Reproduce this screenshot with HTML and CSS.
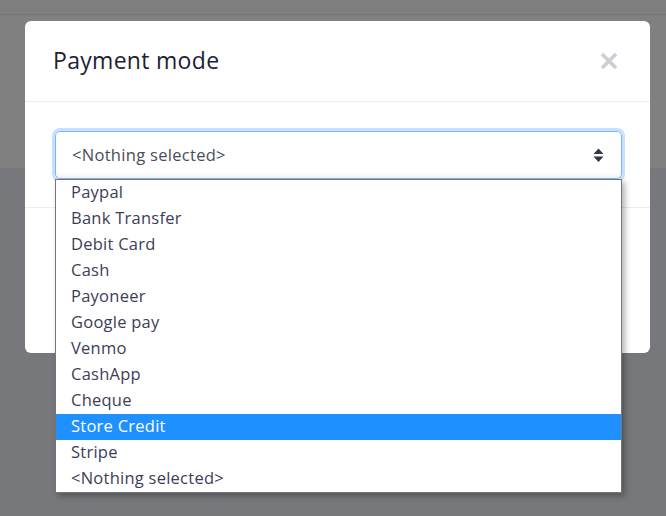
FILE: index.html
```html
<!DOCTYPE html>
<html>
<head>
<meta charset="utf-8">
<link rel="stylesheet" href="styles.css">
</head>
<body>
<div class="page">
  <div class="topbar"></div>
  <div class="band"></div>
  <div class="rest"></div>
</div>
<div class="modal">
  <div class="modal-header">
    <h2 class="modal-title">Payment mode</h2>
    <svg class="close" width="18" height="18" viewBox="0 0 18 18"><path d="M2 2 L16 16 M16 2 L2 16" stroke="#cdcdd5" stroke-width="3.6" stroke-linecap="butt" fill="none"/></svg>
  </div>
  <div class="modal-body">
    <div class="select">
      <span class="select-value">&lt;Nothing selected&gt;</span>
      <svg class="arrows" width="11" height="15" viewBox="0 0 11 15"><path d="M5.5 0.5 L10.5 6 L0.5 6 Z M0.5 8.5 L10.5 8.5 L5.5 14 Z" fill="#33374a"/></svg>
    </div>
  </div>
  <div class="modal-footer"></div>
</div>
<div class="dropdown">
  <div class="opt">Paypal</div>
  <div class="opt">Bank Transfer</div>
  <div class="opt">Debit Card</div>
  <div class="opt">Cash</div>
  <div class="opt">Payoneer</div>
  <div class="opt">Google pay</div>
  <div class="opt">Venmo</div>
  <div class="opt">CashApp</div>
  <div class="opt">Cheque</div>
  <div class="opt active">Store Credit</div>
  <div class="opt">Stripe</div>
  <div class="opt">&lt;Nothing selected&gt;</div>
</div>
</body>
</html>
```
FILE: styles.css
```css
* { box-sizing: border-box; }
html, body {
  margin: 0;
  padding: 0;
  width: 666px;
  height: 516px;
  overflow: hidden;
  font-family: "Open Sans", "Liberation Sans", sans-serif;
}
body { background: #77787c; position: relative; }
.page { display: flex; flex-direction: column; height: 516px; }
.topbar { height: 15px; background: #7f7f7f; border-bottom: 1px solid #747474; }
.band { height: 153px; background: #808080; }
.rest { flex: 1; background: #77787c; }

.modal {
  position: absolute;
  left: 25px;
  top: 21px;
  width: 625px;
  height: 332px;
  background: #fff;
  border-radius: 6px;
  display: flex;
  flex-direction: column;
}
.modal-header {
  height: 81px;
  border-bottom: 1px solid #ebebf0;
  display: flex;
  align-items: center;
  justify-content: space-between;
  padding: 0 32px 0 28px;
}
.modal-title {
  margin: 0;
  font-size: 23px;
  font-weight: 500;
  letter-spacing: 0.3px;
  color: #1e2235;
  line-height: 30px;
  padding-bottom: 2px;
}
.close { display: block; }
.modal-body {
  padding: 29px 28px 28px 30px;
}
.select {
  height: 48px;
  border: 1px solid #7fb6f6;
  border-radius: 5px;
  box-shadow: 0 0 0 3px #c7e0ff, inset 0 -6px 6px -4px rgba(0,0,0,0.05);
  display: flex;
  align-items: center;
  justify-content: space-between;
  padding: 0 17px 0 16px;
}
.select-value {
  font-size: 16.5px;
  letter-spacing: 0.3px;
  color: #4a4b5c;
  line-height: 24px;
  padding-bottom: 1px;
}
.arrows { display: block; }
.modal-footer {
  flex: 1;
  border-top: 1px solid #ebebf0;
}

.dropdown {
  position: absolute;
  left: 55px;
  top: 179px;
  width: 567px;
  height: 314px;
  background: #fff;
  border: 1px solid #767676;
  box-shadow: 3px 3px 6px rgba(0,0,0,0.3);
}
.opt {
  height: 26px;
  line-height: 24px;
  padding-left: 15px;
  font-size: 16.5px;
  letter-spacing: 0.25px;
  color: #3c3e58;
  white-space: nowrap;
}
.opt.active {
  background: #1e90ff;
  color: #fff;
}
```
